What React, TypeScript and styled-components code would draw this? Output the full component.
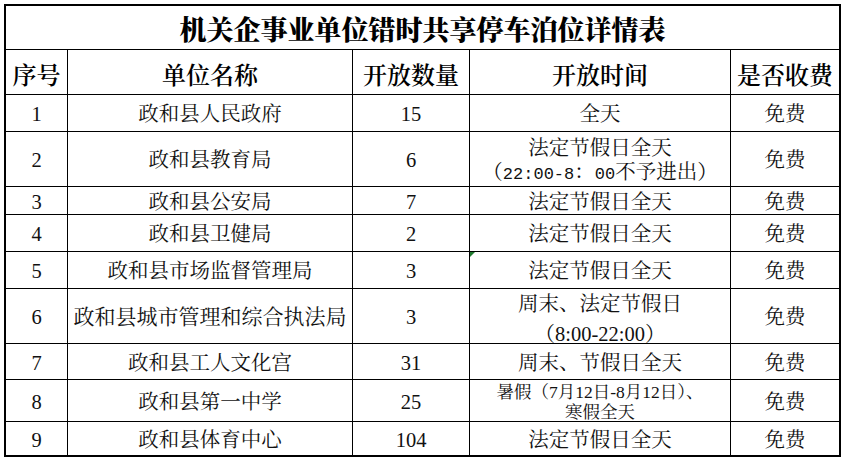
import React from 'react';
import styled, { createGlobalStyle } from 'styled-components';

const GlobalStyle = createGlobalStyle`
    html, body {
        margin: 0;
        padding: 0;
        background: #ffffff;
    }
    body {
        font-family: "Liberation Serif", "Noto Serif CJK SC", "Noto Sans CJK SC", serif;
        color: #111;
    }
`;

const Page = styled.div`
    width: 848px;
    height: 464px;
    padding: 4px 0 0 4px;
    box-sizing: border-box;
    overflow: hidden;
`;

const Sheet = styled.div`
    display: grid;
    grid-template-columns: 61px 284px 116px 260px 108px;
    grid-template-rows: 43px 44px 36px 54px 27px 36px 36px 54px 35px 41px 33px;
    gap: 1px;
    width: max-content;
    background: #000;
    border: 2px solid #000;
`;

const Title = styled.div`
    grid-column: 1 / -1;
    background: #fff;
    display: flex;
    align-items: center;
    justify-content: center;
    font-family: "Noto Serif CJK SC", "Noto Sans CJK SC", serif;
    font-size: 27px;
    font-weight: 900;
    color: #000;
    padding-top: 1px;
`;

const Head = styled.div`
    background: #fff;
    display: flex;
    align-items: center;
    justify-content: center;
    font-family: "Noto Serif CJK SC", "Noto Sans CJK SC", serif;
    font-size: 24px;
    font-weight: 600;
    color: #000;
    padding-top: 2px;
`;

const Cell = styled.div<{ $size?: number; $lh?: number; $pt?: number }>`
    position: relative;
    background: #fff;
    display: flex;
    flex-direction: column;
    align-items: center;
    justify-content: center;
    overflow: hidden;
    white-space: nowrap;
    text-align: center;
    font-size: ${p => p.$size ?? 20.5}px;
    line-height: ${p => p.$lh ?? 24}px;
    padding-top: ${p => p.$pt ?? 2}px;
    box-sizing: border-box;
`;

const Mono = styled.span`
    font-family: "Liberation Mono", monospace;
    font-size: 17px;
`;

const Marker = styled.span`
    position: absolute;
    top: 0;
    left: 0;
    width: 0;
    height: 0;
    border-top: 5px solid #1f7a2e;
    border-right: 5px solid transparent;
`;

interface Row {
    no: string;
    name: string;
    nameSize?: number;
    count: string;
    time: React.ReactNode[];
    timeSize?: number;
    timeLh?: number;
    timePt?: number;
    marker?: boolean;
}

const rows: Row[] = [
    { no: '1', name: '政和县人民政府', count: '15', time: ['全天'] },
    {
        no: '2', name: '政和县教育局', count: '6', timePt: 5,
        time: ['法定节假日全天', <>（<Mono>22:00-8</Mono>：<Mono>00</Mono>不予进出）</>],
    },
    { no: '3', name: '政和县公安局', count: '7', time: ['法定节假日全天'] },
    { no: '4', name: '政和县卫健局', count: '2', time: ['法定节假日全天'] },
    { no: '5', name: '政和县市场监督管理局', count: '3', time: ['法定节假日全天'], marker: true },
    {
        no: '6', name: '政和县城市管理和综合执法局', nameSize: 21, count: '3', timeLh: 30, timePt: 5,
        time: ['周末、法定节假日', '（8:00-22:00）'],
    },
    { no: '7', name: '政和县工人文化宫', count: '31', time: ['周末、节假日全天'] },
    {
        no: '8', name: '政和县第一中学', count: '25', timeSize: 17.5, timeLh: 20, timePt: 2,
        time: ['暑假（7月12日-8月12日）、', '寒假全天'],
    },
    { no: '9', name: '政和县体育中心', count: '104', time: ['法定节假日全天'] },
];

export default function App() {
    return (
        <>
            <GlobalStyle />
            <Page>
                <Sheet>
                    <Title>机关企事业单位错时共享停车泊位详情表</Title>
                    <Head>序号</Head>
                    <Head>单位名称</Head>
                    <Head>开放数量</Head>
                    <Head>开放时间</Head>
                    <Head>是否收费</Head>
                    {rows.map(r => (
                        <React.Fragment key={r.no}>
                            <Cell>{r.no}</Cell>
                            <Cell $size={r.nameSize}>{r.name}</Cell>
                            <Cell>{r.count}</Cell>
                            <Cell $size={r.timeSize} $lh={r.timeLh} $pt={r.timePt}>
                                {r.marker && <Marker />}
                                {r.time.map((t, i) => (
                                    <div key={i}>{t}</div>
                                ))}
                            </Cell>
                            <Cell>免费</Cell>
                        </React.Fragment>
                    ))}
                </Sheet>
            </Page>
        </>
    );
}
